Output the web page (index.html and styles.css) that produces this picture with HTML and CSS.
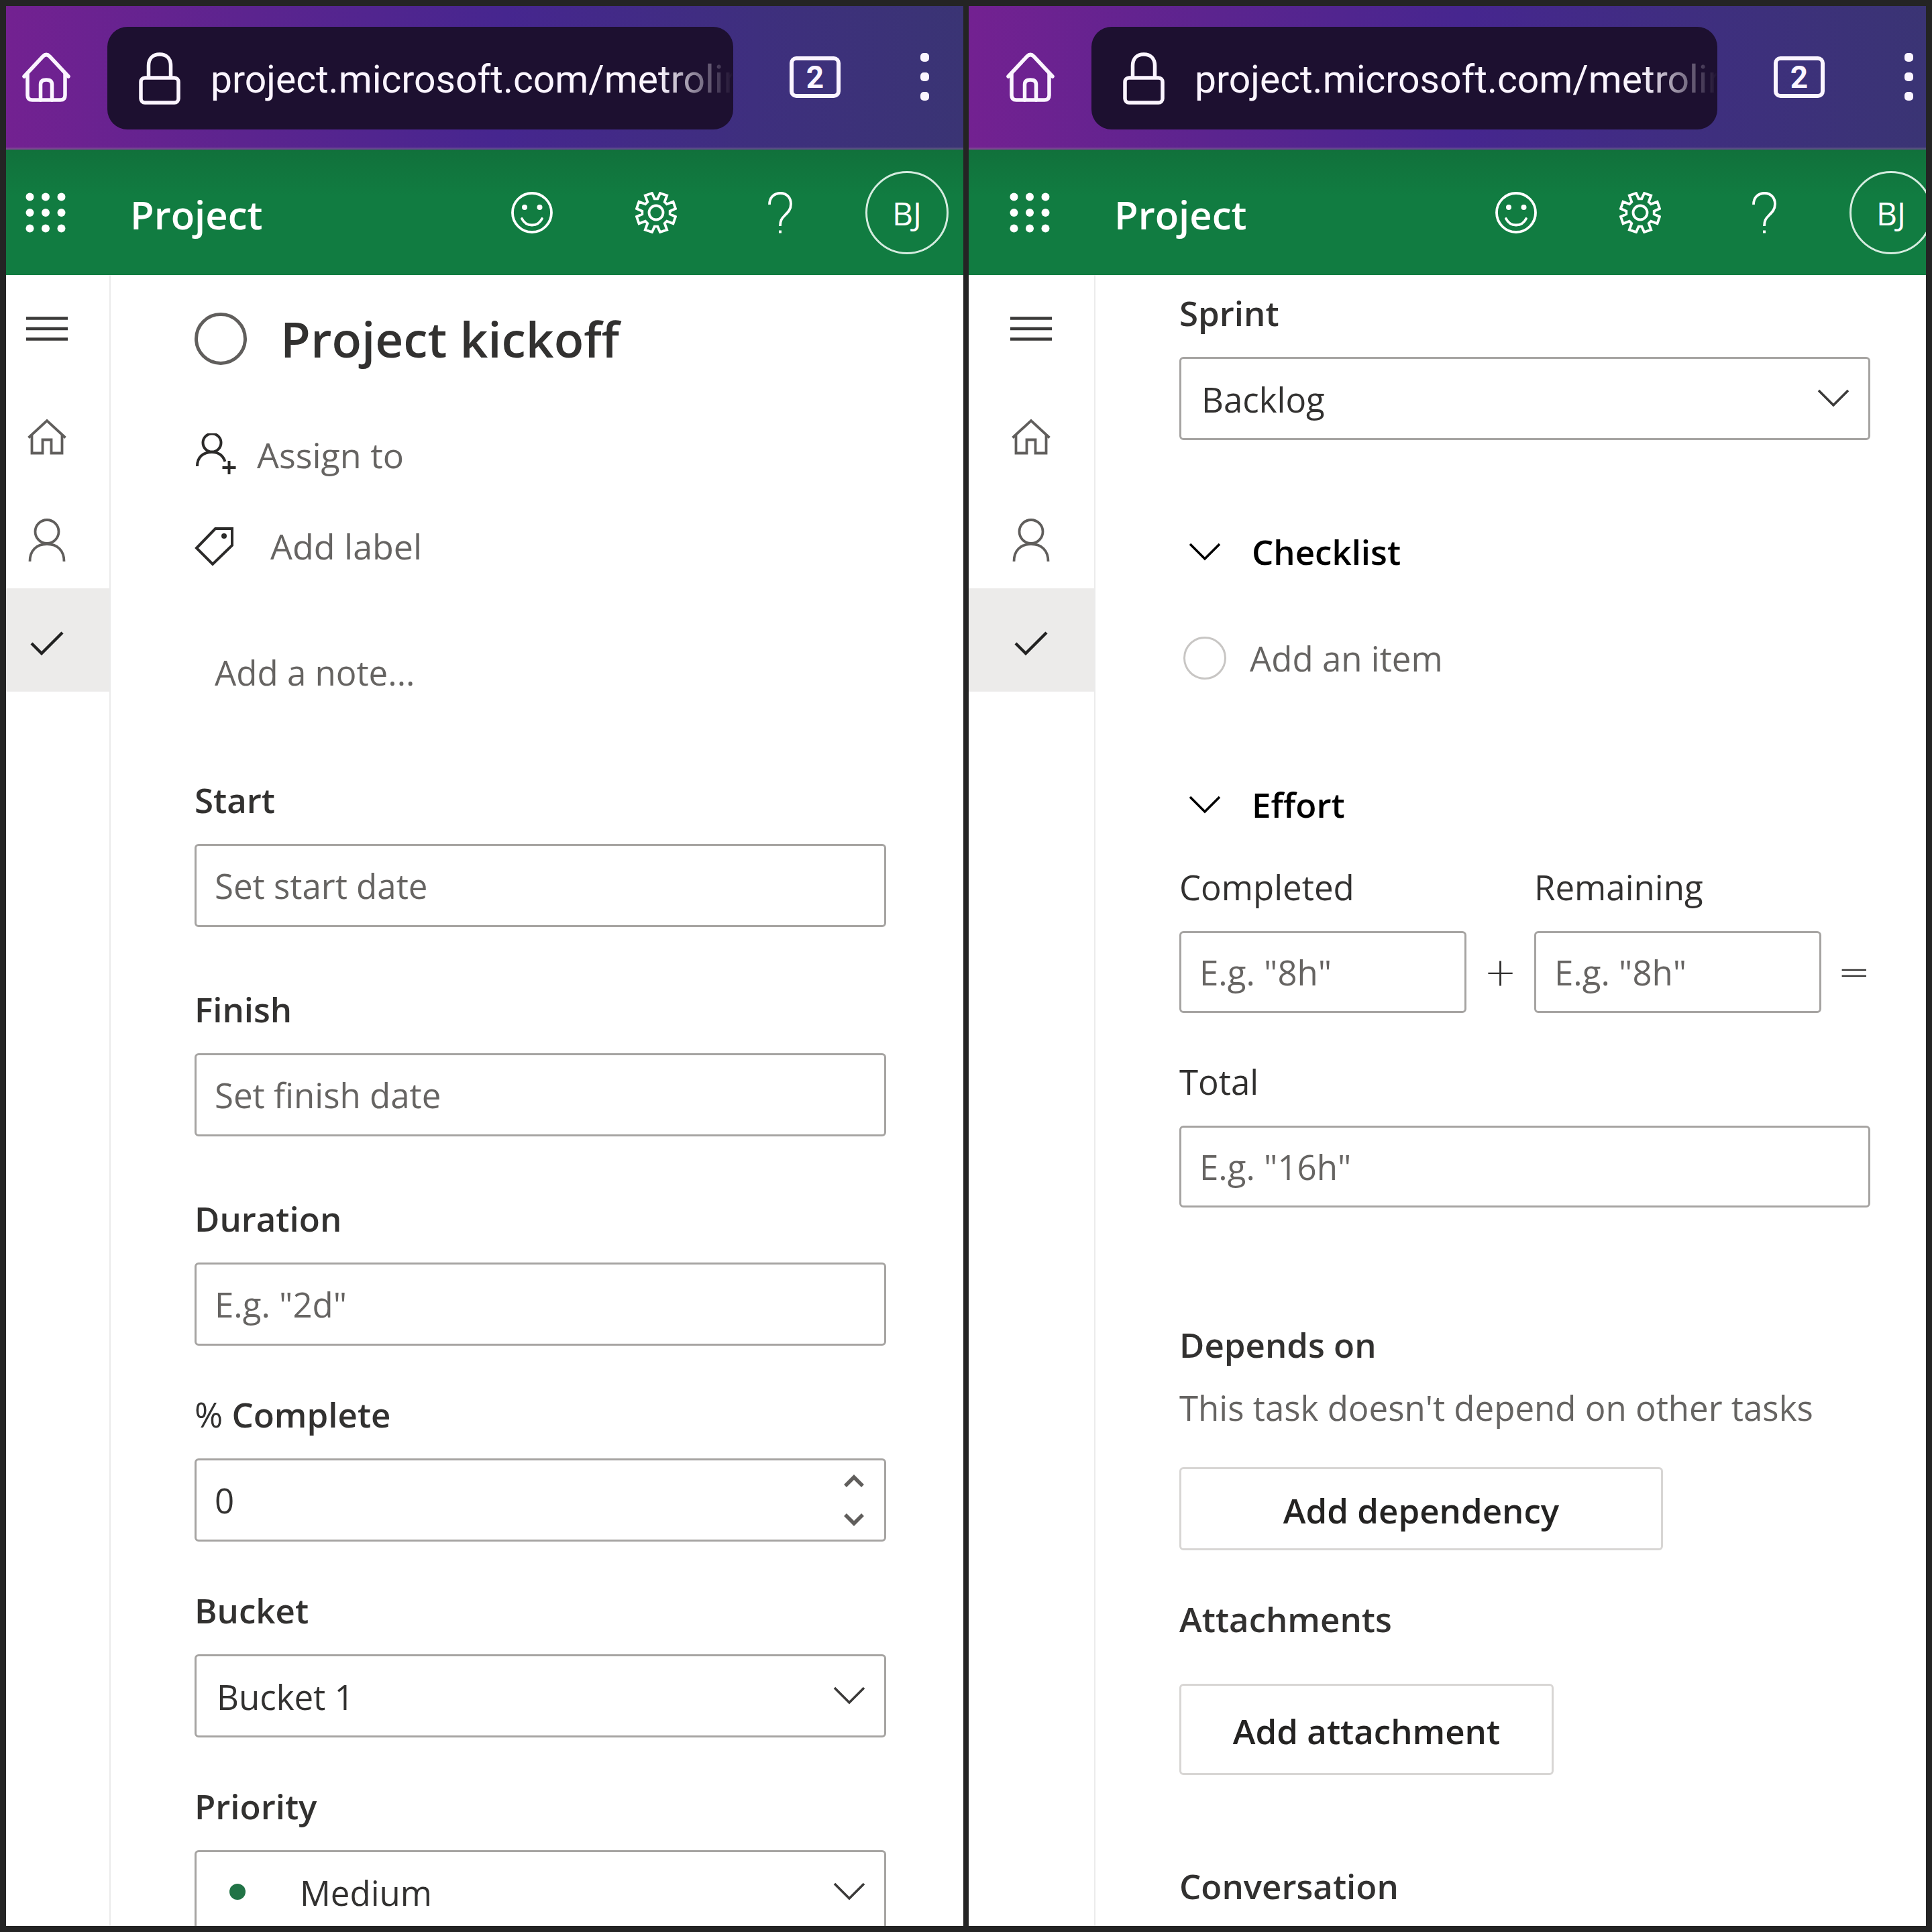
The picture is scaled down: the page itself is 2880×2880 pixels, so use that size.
FILE: index.html
```html
<!DOCTYPE html>
<html lang="en">
<head>
<meta charset="utf-8">
<meta name="viewport" content="width=device-width, initial-scale=1">
<title>Project kickoff - Project</title>
<link rel="stylesheet" href="styles.css">
</head>
<body>
<svg class="sprite" aria-hidden="true">
  <symbol id="i-browser-home" viewBox="0 0 72 74"><g fill="none" stroke="currentColor" stroke-width="5.5" stroke-linecap="round" stroke-linejoin="round"><path d="M3 36L31 6Q36 1 41 6L69 36"/><path d="M8 32V64Q8 71 15 71H57Q64 71 64 64V32"/><path d="M27.500 71V48Q27.500 41 36 41Q44.500 41 44.500 48V71"/></g></symbol>
  <symbol id="i-lock" viewBox="0 0 62 78"><g fill="none" stroke="currentColor" stroke-width="5.5"><path d="M14.500 37V20C14.500 9 21 3 31 3S47.500 9 47.500 20V37"/><rect x="3" y="38" width="56" height="37" rx="6"/></g></symbol>
  <symbol id="i-waffle" viewBox="0 0 60 60"><g fill="currentColor"><circle cx="6.500" cy="6.500" r="6"/><circle cx="30" cy="6.500" r="6"/><circle cx="53.500" cy="6.500" r="6"/><circle cx="6.500" cy="30" r="6"/><circle cx="30" cy="30" r="6"/><circle cx="53.500" cy="30" r="6"/><circle cx="6.500" cy="53.500" r="6"/><circle cx="30" cy="53.500" r="6"/><circle cx="53.500" cy="53.500" r="6"/></g></symbol>
  <symbol id="i-smile" viewBox="0 0 62 62"><g fill="none" stroke="currentColor" stroke-width="3.8" stroke-linecap="round"><circle cx="31" cy="31" r="29"/><path d="M16 40C19 46 24 49.500 31 49.500S43 46 46 40"/></g><g fill="currentColor"><circle cx="20" cy="23" r="4"/><circle cx="42.500" cy="23" r="4"/></g></symbol>
  <symbol id="i-gear" viewBox="-31 -31 62 62"><g fill="none" stroke="currentColor" stroke-width="3.8" stroke-linejoin="miter"><path d="M6-29L16.200-25.500L12.700-16L16-12.700L25.500-16.200L29-6L20.700-2.300V2.300L29 6L25.500 16.200L16 12.700L12.700 16L16.200 25.500L6 29L2.300 20.700H-2.300L-6 29L-16.200 25.500L-12.700 16L-16 12.700L-25.500 16.200L-29 6L-20.700 2.300V-2.300L-29-6L-25.500-16.200L-16-12.700L-12.700-16L-16.200-25.500L-6-29L-2.300-20.700H2.300Z"/><circle r="10.500"/></g></symbol>
  <symbol id="i-help" viewBox="-31 -31 62 62"><path d="M-16-12C-16-23-9-29 .5-29C10-29 16-22 16-13C16-5 12-1 7 4C2 9 0 12 0 20" fill="none" stroke="currentColor" stroke-width="3.8"/><path d="M-2 26.500H2V30.500H-2Z" fill="currentColor"/></symbol>
  <symbol id="i-menu" viewBox="0 0 62 36"><path d="M0 2.500H62M0 18H62M0 33.500H62" stroke="currentColor" stroke-width="4.400"/></symbol>
  <symbol id="i-home" viewBox="0 0 58 54"><path d="M1.500 28.500L29 3L56.500 28.500M6.500 24V51.500H22.500V31.500H35.500V51.500H51.500V24" fill="none" stroke="currentColor" stroke-width="3.8"/></symbol>
  <symbol id="i-person" viewBox="0 0 56 64"><g fill="none" stroke="currentColor" stroke-width="3.8"><circle cx="28" cy="19.500" r="17.500"/><path d="M2.500 64C2.500 48 12 38 28 38S53.500 48 53.500 64"/></g></symbol>
  <symbol id="i-check" viewBox="0 0 50 36"><path d="M2 18L17 33L48 2" fill="none" stroke="currentColor" stroke-width="4.400"/></symbol>
  <symbol id="i-assign" viewBox="0 0 62 64"><g fill="none" stroke="currentColor" stroke-width="4"><circle cx="26" cy="14" r="13.500"/><path d="M4 49C4 35 13 28 26 28C35 28 42 32 45.500 42M41.500 51H61.500M51.500 41V61"/></g></symbol>
  <symbol id="i-tag" viewBox="0 0 60 60"><path d="M3 33L31 4H56V29L27 57Z" fill="none" stroke="currentColor" stroke-width="4"/><circle cx="44" cy="15" r="4" fill="currentColor"/></symbol>
  <symbol id="i-chevron" viewBox="0 0 48 27"><path d="M2 2L24 24L46 2" fill="none" stroke="currentColor" stroke-width="3.6"/></symbol>
  <symbol id="i-step" viewBox="0 0 32 20"><path d="M3 17L16 4L29 17" fill="none" stroke="currentColor" stroke-width="5.5"/></symbol>
</svg>

<main class="frame">
  <section class="phone" aria-label="Task details, top">
    <div class="browser"><div class="browser-row">
      <button class="icon-btn" aria-label="Home page"><svg class="g-bhome"><use href="#i-browser-home"/></svg></button>
      <div class="address"><svg class="g-lock"><use href="#i-lock"/></svg><span class="url">project.microsoft.com/metrolin</span></div>
      <button class="tabs" aria-label="Open tabs">2</button>
      <button class="kebab" aria-label="Menu"><i></i><i></i><i></i></button>
    </div></div>
    <header class="suite"><div class="suite-row">
      <button class="icon-btn" aria-label="App launcher"><svg class="g-waffle"><use href="#i-waffle"/></svg></button>
      <a class="brand" href="#">Project</a>
      <div class="suite-actions">
        <button class="icon-btn" aria-label="Feedback"><svg class="g-suite"><use href="#i-smile"/></svg></button>
        <button class="icon-btn" aria-label="Settings"><svg class="g-suite"><use href="#i-gear"/></svg></button>
        <button class="icon-btn" aria-label="Help"><svg class="g-suite"><use href="#i-help"/></svg></button>
      </div>
      <button class="avatar" aria-label="Account">BJ</button>
    </div></header>
    <div class="body">
      <nav class="rail" aria-label="Main">
        <button class="rail-item menu" aria-label="Expand"><svg class="g-menu"><use href="#i-menu"/></svg></button>
        <a class="rail-item" href="#" aria-label="Home"><svg class="g-home"><use href="#i-home"/></svg></a>
        <a class="rail-item" href="#" aria-label="My work"><svg class="g-person"><use href="#i-person"/></svg></a>
        <a class="rail-item current" href="#" aria-label="Tasks"><svg class="g-check"><use href="#i-check"/></svg></a>
      </nav>
      <form class="details">
        <div class="title-row">
          <input class="round" type="checkbox" id="done">
          <label class="title" for="done">Project kickoff</label>
        </div>
        <button type="button" class="action assign"><svg class="g-assign"><use href="#i-assign"/></svg>Assign to</button>
        <button type="button" class="action tag"><svg class="g-tag"><use href="#i-tag"/></svg>Add label</button>
        <input class="note" type="text" placeholder="Add a note..." aria-label="Note">
        <div class="fields">
          <div class="field roomy"><label for="start">Start</label><input class="box" id="start" type="text" placeholder="Set start date"></div>
          <div class="field roomy"><label for="finish">Finish</label><input class="box" id="finish" type="text" placeholder="Set finish date"></div>
          <div class="field"><label for="duration">Duration</label><input class="box" id="duration" type="text" placeholder='E.g. "2d"'></div>
          <div class="field"><label for="complete"><span class="percent">%</span> Complete</label>
            <div class="control"><input class="box" id="complete" type="number" value="0">
              <div class="stepper"><button type="button" aria-label="Increase"><svg class="g-step"><use href="#i-step"/></svg></button><button type="button" class="down" aria-label="Decrease"><svg class="g-step"><use href="#i-step"/></svg></button></div></div></div>
          <div class="field"><label for="bucket">Bucket</label>
            <div class="control"><select class="box" id="bucket"><option>Bucket 1</option></select><svg class="g-chevron caret"><use href="#i-chevron"/></svg></div></div>
          <div class="field"><label for="priority">Priority</label>
            <div class="control"><select class="box with-dot" id="priority"><option>Medium</option></select><span class="dot"></span><svg class="g-chevron caret"><use href="#i-chevron"/></svg></div></div>
        </div>
      </form>
    </div>
  </section>

  <section class="phone shifted" aria-label="Task details, continued">
    <div class="browser"><div class="browser-row">
      <button class="icon-btn" aria-label="Home page"><svg class="g-bhome"><use href="#i-browser-home"/></svg></button>
      <div class="address"><svg class="g-lock"><use href="#i-lock"/></svg><span class="url">project.microsoft.com/metrolin</span></div>
      <button class="tabs" aria-label="Open tabs">2</button>
      <button class="kebab" aria-label="Menu"><i></i><i></i><i></i></button>
    </div></div>
    <header class="suite"><div class="suite-row">
      <button class="icon-btn" aria-label="App launcher"><svg class="g-waffle"><use href="#i-waffle"/></svg></button>
      <a class="brand" href="#">Project</a>
      <div class="suite-actions">
        <button class="icon-btn" aria-label="Feedback"><svg class="g-suite"><use href="#i-smile"/></svg></button>
        <button class="icon-btn" aria-label="Settings"><svg class="g-suite"><use href="#i-gear"/></svg></button>
        <button class="icon-btn" aria-label="Help"><svg class="g-suite"><use href="#i-help"/></svg></button>
      </div>
      <button class="avatar" aria-label="Account">BJ</button>
    </div></header>
    <div class="body">
      <nav class="rail" aria-label="Main">
        <button class="rail-item menu" aria-label="Expand"><svg class="g-menu"><use href="#i-menu"/></svg></button>
        <a class="rail-item" href="#" aria-label="Home"><svg class="g-home"><use href="#i-home"/></svg></a>
        <a class="rail-item" href="#" aria-label="My work"><svg class="g-person"><use href="#i-person"/></svg></a>
        <a class="rail-item current" href="#" aria-label="Tasks"><svg class="g-check"><use href="#i-check"/></svg></a>
      </nav>
      <form class="details">
        <div class="field"><label for="sprint">Sprint</label>
          <div class="control"><select class="box" id="sprint"><option>Backlog</option></select><svg class="g-chevron caret"><use href="#i-chevron"/></svg></div></div>
        <section class="checklist">
          <button type="button" class="fold"><svg class="g-chevron"><use href="#i-chevron"/></svg>Checklist</button>
          <div class="new-item"><input class="round small" type="checkbox" aria-label="Item done" disabled><input class="item-name" type="text" placeholder="Add an item" aria-label="Checklist item"></div>
        </section>
        <section class="effort">
          <button type="button" class="fold"><svg class="g-chevron"><use href="#i-chevron"/></svg>Effort</button>
          <div class="sum">
            <div class="field light"><label for="completed">Completed</label><input class="box" id="completed" type="text" placeholder='E.g. "8h"'></div>
            <span class="op">+</span>
            <div class="field light"><label for="remaining">Remaining</label><input class="box" id="remaining" type="text" placeholder='E.g. "8h"'></div>
            <span class="op last">=</span>
          </div>
          <div class="field light"><label for="total">Total</label><input class="box" id="total" type="text" placeholder='E.g. "16h"'></div>
        </section>
        <section class="depends">
          <h3>Depends on</h3>
          <p>This task doesn't depend on other tasks</p>
          <button type="button" class="outline dependency">Add dependency</button>
        </section>
        <section class="attachments">
          <h3>Attachments</h3>
          <button type="button" class="outline attachment">Add attachment</button>
        </section>
        <section class="conversation"><h3>Conversation</h3></section>
      </form>
    </div>
  </section>
</main>
</body>
</html>
```
FILE: styles.css
```css
* { box-sizing: border-box; }

body {
  margin: 0;
  background: #242424;
  color: #323130;
  font-family: "Open Sans", "Noto Sans", sans-serif;
  font-size: 51px;
  line-height: 64px;
}

svg { display: block; flex: none; }
.sprite { position: absolute; width: 0; height: 0; }

button, input, select {
  margin: 0;
  padding: 0;
  border: 0;
  background: none;
  color: inherit;
  font: inherit;
}
a { color: inherit; text-decoration: none; }
h3, p { margin: 0; }
h3 { font-size: inherit; font-weight: 600; }

.frame {
  display: grid;
  grid-template-columns: minmax(0, 1fr) minmax(0, 1fr);
  gap: 8px;
  height: 100vh;
  padding: 9px;
}
.phone {
  display: flex;
  flex-direction: column;
  overflow: hidden;
  background: #fff;
}
.phone > * { flex: none; }

/* Browser chrome */
.browser {
  height: 214px;
  border-bottom: 3px solid rgba(150, 150, 150, .3);
  background: linear-gradient(92deg, #732191 0%, #5c248f 25%, #46268f 52%, #3e2f7e 78%, #3a3474 100%) border-box;
  color: #fbf5ff;
}
.browser-row {
  display: flex;
  align-items: center;
  height: 100%;
  padding: 0 51px 0 24px;
}
.shifted .browser, .shifted .suite { padding-left: 32px; }
.shifted .browser-row, .shifted .suite-row { width: calc(100% + 32px); }
.icon-btn { display: block; flex: none; }
.address {
  display: flex;
  flex: 1;
  align-items: center;
  min-width: 0;
  height: 153px;
  margin: 4px 84px 0 55px;
  padding-left: 47px;
  border-radius: 30px;
  background: #1d1030;
}
.url {
  flex: 1;
  min-width: 0;
  margin-left: 45px;
  padding-top: 4px;
  overflow: hidden;
  font-family: Roboto, sans-serif;
  font-size: 57px;
  white-space: nowrap;
  -webkit-mask-image: linear-gradient(to left, transparent 0, #000 110px);
  mask-image: linear-gradient(to left, transparent 0, #000 110px);
}
.tabs {
  width: 76px;
  height: 62px;
  border: 6px solid;
  border-radius: 10px;
  font-family: Roboto, sans-serif;
  font-size: 46px;
  font-weight: 700;
  line-height: 50px;
}
.kebab {
  display: grid;
  gap: 16px;
  margin-left: 119px;
}
.kebab i {
  width: 13px;
  height: 13px;
  border-radius: 5px;
  background: currentColor;
}

/* Suite header */
.suite {
  height: 187px;
  background: linear-gradient(#11713b, #117c41 70px);
  color: #fff;
}
.suite-row {
  display: flex;
  align-items: center;
  height: 100%;
  padding: 0 22px 0 29px;
}
.brand {
  margin: 6px auto 0 96px;
  font-size: 58px;
  font-weight: 600;
}
.suite-actions {
  display: flex;
  gap: 123px;
  margin-right: 96px;
}
.avatar {
  width: 124px;
  height: 124px;
  padding-top: 3px;
  border: 3px solid #d5ecdf;
  border-radius: 50%;
  font-size: 48px;
}

/* Navigation rail */
.body { display: flex; }
.rail {
  flex: none;
  width: 156px;
  min-height: 100vh;
  padding-top: 5px;
  border-right: 2px solid #ebebeb;
  color: #605e5c;
}
.shifted .rail { width: 189px; }
.rail-item {
  display: flex;
  align-items: center;
  justify-content: center;
  width: 100%;
  height: 154px;
  padding: 10px 33px 0 0;
}
.rail-item.menu { padding-top: 0; padding-bottom: 4px; color: #3b3a39; }
.shifted .rail-item { padding-right: 1px; }
.rail-item.current { background: #ecebea; color: #222; }

/* Task form */
.details {
  flex: 1;
  min-width: 0;
  padding: 47px 115px 0 125px;
}
.shifted .details { padding: 24px 83px 0 125px; }
.title-row {
  display: flex;
  align-items: center;
  gap: 50px;
}
.title {
  font-size: 73px;
  font-weight: 600;
  line-height: 96px;
}
.round {
  appearance: none;
  flex: none;
  width: 78px;
  height: 78px;
  border: 5px solid #605e5c;
  border-radius: 50%;
}
.round.small {
  width: 64px;
  height: 64px;
  border: 3px solid #c8c6c4;
}
.action {
  display: flex;
  align-items: center;
  color: #666462;
}
.action svg { color: #2b2a29; }
.assign { gap: 31px; margin-top: 93px; font-size: 52px; }
.tag { gap: 53px; margin-top: 72px; font-size: 52px; }
.note {
  display: block;
  width: 100%;
  height: 64px;
  margin: 124px 0 126px;
  padding-left: 30px;
}
::placeholder { color: #666462; opacity: 1; }

.fields { display: grid; gap: 70px; }
.field label {
  display: block;
  margin-bottom: 34px;
  font-weight: 600;
}
.field.roomy { margin-bottom: 20px; }
.field.light label { font-weight: 400; }
.percent { font-weight: 400; }
.control { position: relative; }
.box {
  appearance: none;
  display: block;
  width: 100%;
  height: 124px;
  padding: 0 27px;
  border: 3px solid #a6a4a2;
  border-radius: 6px;
  background: #fff;
}
.light .box { height: 122px; }
select.box { padding: 2px 30px 0; }
select.with-dot { padding-left: 154px; }
input[type="number"]::-webkit-inner-spin-button { appearance: none; margin: 0; }
.caret {
  position: absolute;
  top: 48px;
  right: 31px;
  color: #3b3a39;
}
.dot {
  position: absolute;
  top: 50px;
  left: 52px;
  width: 24px;
  height: 24px;
  border-radius: 50%;
  background: #217346;
}
.stepper {
  position: absolute;
  top: 24px;
  right: 32px;
  display: grid;
  gap: 37px;
  color: #605e5c;
}
.stepper button { display: block; }
.down { transform: rotate(180deg); }

/* Foldable sections */
.fold {
  display: flex;
  align-items: center;
  gap: 46px;
  padding-left: 14px;
  color: #000;
  font-weight: 600;
}
.checklist { margin-top: 134px; }
.new-item {
  display: flex;
  align-items: center;
  gap: 35px;
  margin-top: 95px;
  padding-left: 6px;
}
.item-name { flex: 1; height: 64px; }
.effort { margin-top: 154px; }
.sum {
  display: grid;
  grid-template-columns: minmax(0, 1fr) 101px minmax(0, 1fr) 73px;
  margin: 59px 0 70px;
}
.op {
  align-self: end;
  font-family: "DejaVu Sans", sans-serif;
  font-size: 58px;
  font-weight: 200;
  line-height: 122px;
  text-align: center;
}
.op.last { text-align: right; }

.depends { margin-top: 172px; }
.depends p { margin: 30px 0 57px; color: #666462; }
.outline {
  display: block;
  padding-top: 3px;
  border: 3px solid #d8d6d4;
  border-radius: 6px;
  color: #242322;
  font-weight: 600;
}
.dependency { width: 70%; height: 124px; }
.attachments { margin-top: 70px; }
.attachment { width: 558px; height: 136px; margin-top: 65px; }
.conversation { margin-top: 133px; }

/* Icon sizes */
.g-bhome { width: 72px; height: 74px; }
.g-lock { width: 62px; height: 78px; }
.g-waffle { width: 60px; height: 60px; }
.g-suite { width: 62px; height: 62px; }
.g-menu { width: 62px; height: 36px; }
.g-home { width: 58px; height: 54px; }
.g-person { width: 56px; height: 64px; }
.g-check { width: 50px; height: 36px; }
.g-assign { width: 62px; height: 64px; }
.g-tag { width: 60px; height: 60px; }
.g-chevron { width: 48px; height: 27px; }
.g-step { width: 32px; height: 20px; }
```
